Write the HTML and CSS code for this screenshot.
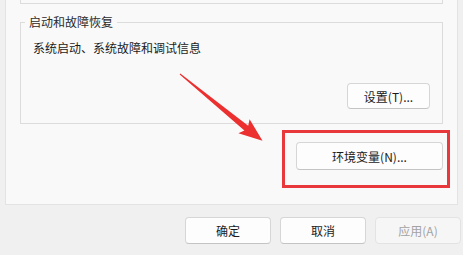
FILE: index.html
```html
<!DOCTYPE html>
<html lang="zh-CN">
<head>
    <meta charset="UTF-8">
    <meta name="viewport" content="width=device-width, initial-scale=1.0">
    <title>系统属性 - 高级</title>
    <link rel="stylesheet" href="styles.css">
</head>
<body>
    <div class="panel">
        <div class="prev-group"></div>

        <fieldset class="group">
            <legend>启动和故障恢复</legend>
            <p class="group-desc">系统启动、系统故障和调试信息</p>
            <div class="group-actions">
                <button class="btn btn-settings">设置(T)...</button>
            </div>
        </fieldset>

        <div class="env-row">
            <button class="btn btn-env">环境变量(N)...</button>
        </div>
    </div>

    <div class="footer">
        <button class="btn btn-footer">确定</button>
        <button class="btn btn-footer">取消</button>
        <button class="btn btn-footer" disabled>应用(A)</button>
    </div>

    <!-- annotation overlay -->
    <div class="highlight"></div>
    <svg class="arrow" width="463" height="255" viewBox="0 0 463 255">
        <polygon points="179.7,74.4 244.4,130.6 238.4,133.3 262.5,140.8 249.6,119.3 248.2,125.8 180.3,73.6" fill="#ec2f2f"/>
    </svg>
</body>
</html>
```

FILE: styles.css
```css
* {
    box-sizing: border-box;
}

body {
    margin: 0;
    width: 463px;
    height: 255px;
    overflow: hidden;
    position: relative;
    background-color: #f0f0f0;
    color: #1b1b1b;
    font-family: "Noto Sans CJK SC", "Noto Sans", sans-serif;
    font-size: 12px;
}

.panel {
    margin-left: 5px;
    width: 453px;
    height: 205px;
    padding: 0 14px;
    background-color: #f9f9f9;
    border: 1px solid #e3e3e3;
    border-top: none;
}

.prev-group {
    height: 4px;
    border: 1px solid #dcdcdc;
    border-top: none;
}

.group {
    margin: 10px 0 0;
    padding: 0 12px 14px 4px;
    min-width: 0;
    border: 1px solid #dcdcdc;
}

.group legend {
    padding: 0 4px;
    line-height: 16px;
    color: #2b2b2b;
}

.group-desc {
    margin: 10px 0 0 8px;
    line-height: 16px;
}

.group-actions {
    display: flex;
    justify-content: flex-end;
    margin-top: 27px;
}

.env-row {
    display: flex;
    justify-content: flex-end;
    margin-top: 18px;
}

.btn {
    display: flex;
    align-items: center;
    justify-content: center;
    padding: 0;
    font-family: inherit;
    font-size: 12px;
    color: #1b1b1b;
    background-color: #fdfdfd;
    border: 1px solid #d6d6d6;
    border-bottom-color: #c4c4c4;
    border-radius: 4px;
}

.btn:disabled {
    color: #a3a3a3;
    background-color: #f6f6f6;
    border-color: #e3e3e3;
}

.btn-settings {
    width: 83px;
    height: 26px;
}

.btn-env {
    width: 147px;
    height: 28px;
}

.footer {
    display: flex;
    justify-content: flex-end;
    gap: 9px;
    margin-top: 12px;
    padding-right: 2px;
}

.btn-footer {
    width: 86px;
    height: 27px;
}

.highlight {
    position: absolute;
    left: 282px;
    top: 130px;
    width: 168px;
    height: 58px;
    border: 3px solid #e8383c;
}

.arrow {
    position: absolute;
    left: 0;
    top: 0;
    pointer-events: none;
}
```
